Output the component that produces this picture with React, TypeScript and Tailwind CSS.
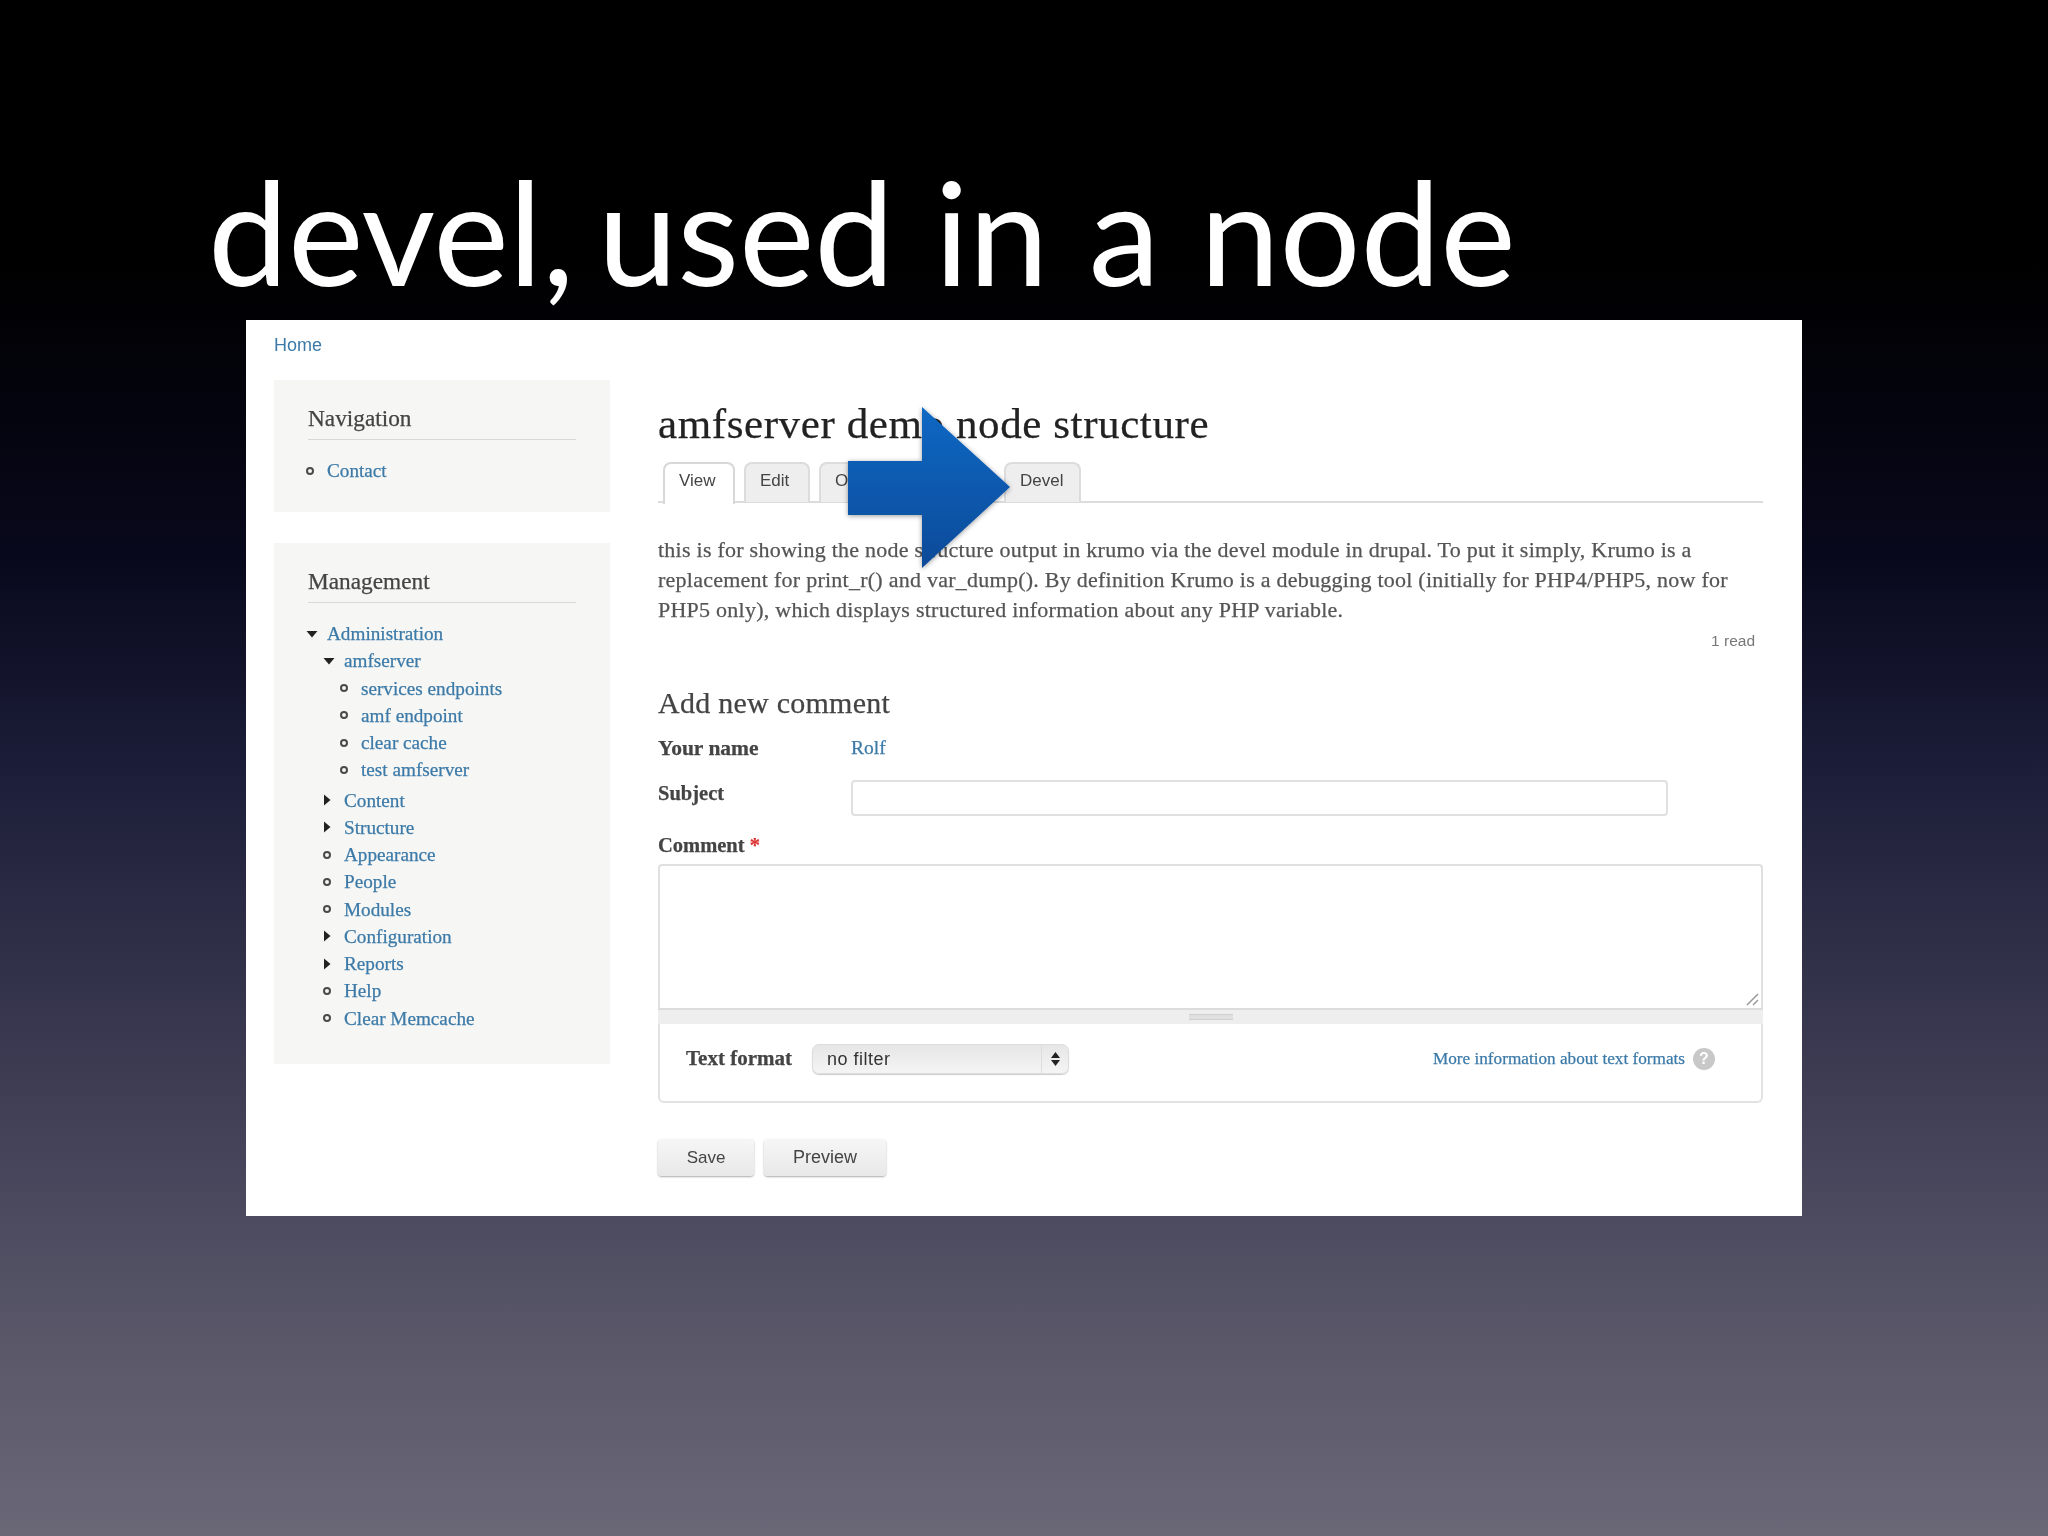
const serif = "font-['Liberation_Serif',serif] [-webkit-text-stroke:0.25px]";
const sans = "font-['Liberation_Sans',Arial,sans-serif]";

function Bullet() {
  return <span className="block h-[8px] w-[8px] rounded-full border-2 border-[#4a4a4a]" />;
}

function TriRight() {
  return (
    <svg width="8" height="12" viewBox="0 0 8 12">
      <path d="M1 0.5 L7.5 6 L1 11.5 Z" fill="#222" />
    </svg>
  );
}

function TriDown() {
  return (
    <svg width="12" height="8" viewBox="0 0 12 8">
      <path d="M0.5 1 L11.5 1 L6 7.5 Z" fill="#222" />
    </svg>
  );
}

function TreeRow({ label, depth, kind }: { label: string; depth: number; kind: 'leaf' | 'open' | 'closed' }) {
  const indent = depth === 0 ? 'pl-0' : depth === 1 ? 'pl-[17px]' : 'pl-[34px]';
  return (
    <div className={`flex h-[27.25px] items-center ${indent}`}>
      <span className="-ml-[2px] flex w-[21px] shrink-0 items-center justify-start">
        {kind === 'leaf' && <Bullet />}
        {kind === 'open' && <TriDown />}
        {kind === 'closed' && <TriRight />}
      </span>
      <a className={`${serif} text-[19.2px] leading-none text-[#3c7aa8] whitespace-nowrap`}>{label}</a>
    </div>
  );
}

function Block({ title, children, height }: { title: string; children: React.ReactNode; height: string }) {
  return (
    <div className={`bg-[#f6f6f4] px-[34px] pt-[24px] ${height}`}>
      <h2 className={`${serif} border-b border-[#d8d8d6] pb-[7px] text-[23.3px] leading-[28px] text-[#444]`}>{title}</h2>
      {children}
    </div>
  );
}

function Tab({ label, width, active }: { label: string; width: string; active?: boolean }) {
  return (
    <div
      className={`${sans} ${width} ${
        active ? 'bg-white -mb-[2px] h-[42px] border-[#d8d8d8]' : 'bg-[#eeeeee] h-[40px] border-[#dcdcdc]'
      } rounded-t-[8px] border-x-2 border-t-2 pl-[14px] pt-[6px] text-[17px] leading-[22px] text-[#444]`}
    >
      {label}
    </div>
  );
}

export default function App() {
  return (
    <div className="relative h-[1536px] w-[2048px] overflow-hidden bg-[linear-gradient(180deg,#000000_0%,#000000_17%,#08081c_36%,#1c1d38_50%,#403f56_72%,#5a5869_88%,#6a6877_100%)]">
      <div className="h-[320px] pl-[208px] pt-[141px]">
        <h1 className="font-['Lato',sans-serif] text-[143px] font-normal leading-[180px] tracking-[-0.2px] [word-spacing:4px] text-white whitespace-nowrap">
          <span className="-mr-[17px]">devel,</span> used in a node
        </h1>
      </div>

      <div className="ml-[246px] flex h-[896px] w-[1556px] bg-white">
        <aside className="ml-[28px] w-[336px] shrink-0 blur-[0.4px]">
          <div className={`${sans} h-[60px] pt-[15px] text-[18px] leading-[20px] text-[#3c7aa8]`}>Home</div>
          <Block title="Navigation" height="h-[132px]">
            <div className="mt-[17px]">
              <TreeRow label="Contact" depth={0} kind="leaf" />
            </div>
          </Block>
          <div className="mt-[31px]">
            <Block title="Management" height="h-[521px]">
              <div className="mt-[17px]">
                <TreeRow label="Administration" depth={0} kind="open" />
                <TreeRow label="amfserver" depth={1} kind="open" />
                <TreeRow label="services endpoints" depth={2} kind="leaf" />
                <TreeRow label="amf endpoint" depth={2} kind="leaf" />
                <TreeRow label="clear cache" depth={2} kind="leaf" />
                <TreeRow label="test amfserver" depth={2} kind="leaf" />
                <div className="mt-[3px]">
                  <TreeRow label="Content" depth={1} kind="closed" />
                  <TreeRow label="Structure" depth={1} kind="closed" />
                  <TreeRow label="Appearance" depth={1} kind="leaf" />
                  <TreeRow label="People" depth={1} kind="leaf" />
                  <TreeRow label="Modules" depth={1} kind="leaf" />
                  <TreeRow label="Configuration" depth={1} kind="closed" />
                  <TreeRow label="Reports" depth={1} kind="closed" />
                  <TreeRow label="Help" depth={1} kind="leaf" />
                  <TreeRow label="Clear Memcache" depth={1} kind="leaf" />
                </div>
              </div>
            </Block>
          </div>
        </aside>

        <main className="ml-[48px] w-[1105px] shrink-0 pt-[80px] blur-[0.4px]">
          <h1 className={`${serif} text-[43px] leading-[48px] tracking-[0.6px] text-[#222] whitespace-nowrap`}>amfserver demo node structure</h1>

          <div className="mt-[14px] flex h-[41px] gap-[9px] border-b-2 border-[#dcdcdc] pl-[5px]">
            <Tab label="View" width="w-[72px]" active />
            <Tab label="Edit" width="w-[66px]" />
            <Tab label="Outline" width="w-[110px]" />
            <div className="w-[57px]" />
            <Tab label="Devel" width="w-[77px]" />
          </div>

          <p className={`${serif} mt-[32px] text-[22px] leading-[30px] tracking-[0.25px] text-[#555] whitespace-nowrap`}>
            this is for showing the node structure output in krumo via the devel module in drupal. To put it simply, Krumo is a
            <br />
            replacement for print_r() and var_dump(). By definition Krumo is a debugging tool (initially for PHP4/PHP5, now for
            <br />
            PHP5 only), which displays structured information about any PHP variable.
          </p>
          <div className={`${sans} mt-[8px] pr-[8px] text-right text-[15.5px] leading-[16px] text-[#777]`}>1 read</div>

          <h2 className={`${serif} mt-[36px] text-[30px] leading-[36px] tracking-[0.25px] text-[#444]`}>Add new comment</h2>

          <div className="mt-[15px] flex h-[24px] items-center">
            <span className={`${serif} w-[193px] text-[21.5px] font-bold text-[#444]`}>Your name</span>
            <a className={`${serif} text-[19.5px] text-[#3c7aa8]`}>Rolf</a>
          </div>

          <div className="mt-[20px] flex h-[36px] items-start">
            <span className={`${serif} w-[193px] text-[20.5px] font-bold leading-[26px] text-[#444]`}>Subject</span>
            <input className="h-[36px] w-[817px] rounded-[4px] border-2 border-[#e0e0e0] bg-white" readOnly />
          </div>

          <div className={`${serif} mt-[17px] text-[20.5px] font-bold leading-[24px] text-[#444]`}>
            Comment <span className="text-[#d33]">*</span>
          </div>

          <div className="relative mt-[7px] h-[144px] rounded-t-[4px] border-2 border-b-0 border-[#e0e0e0] bg-white">
            <svg className="absolute bottom-[2px] right-[2px]" width="14" height="14" viewBox="0 0 14 14">
              <path d="M2 13 L13 2 M8 13 L13 8" stroke="#999" strokeWidth="1.5" fill="none" />
            </svg>
          </div>
          <div className="flex h-[16px] items-center justify-center border-t-2 border-[#dcdcdc] bg-[#eeeeee]">
            <span className="block h-[6px] w-[44px] border-y border-[#cfcfcf] bg-[#e0e0e0]" />
          </div>
          <div className="flex h-[79px] items-center rounded-b-[6px] border-2 border-t-0 border-[#e2e2e2] pb-[7px] pl-[26px] pr-[46px]">
            <span className={`${serif} w-[126px] text-[21px] font-bold text-[#444]`}>Text format</span>
            <div className="flex h-[30px] w-[257px] items-center rounded-[7px] border border-[#dddddd] bg-[linear-gradient(180deg,#e6e6e6,#f4f4f4)] shadow-[0_1px_1px_#cccccc]">
              <span className={`${sans} flex-1 pl-[14px] text-[18px] tracking-[0.5px] text-[#333]`}>no filter</span>
              <span className="flex h-full w-[27px] flex-col items-center justify-center gap-[2px] border-l border-[#dddddd]">
                <svg width="9" height="6" viewBox="0 0 9 6"><path d="M4.5 0 L9 6 L0 6 Z" fill="#222" /></svg>
                <svg width="9" height="6" viewBox="0 0 9 6"><path d="M0 0 L9 0 L4.5 6 Z" fill="#222" /></svg>
              </span>
            </div>
            <a className={`${serif} ml-auto text-[17.2px] text-[#3c7aa8] whitespace-nowrap`}>More information about text formats</a>
            <span className={`${sans} ml-[8px] flex h-[22px] w-[22px] items-center justify-center rounded-full bg-[#c8c8c8] text-[16px] font-bold text-white`}>?</span>
          </div>

          <div className="mt-[36px] flex gap-[10px]">
            <button className={`${sans} h-[37px] w-[96px] rounded-[4px] bg-[linear-gradient(180deg,#f6f6f6,#e8e8e8)] text-[17px] text-[#444] shadow-[0_1px_2px_#aaaaaa]`}>Save</button>
            <button className={`${sans} h-[37px] w-[122px] rounded-[4px] bg-[linear-gradient(180deg,#f6f6f6,#e8e8e8)] text-[18px] text-[#444] shadow-[0_1px_2px_#aaaaaa]`}>Preview</button>
          </div>
        </main>
      </div>

      {/* big pointer laid over the tabs */}
      <svg className="absolute left-[840px] top-[400px]" width="180" height="176" viewBox="840 400 180 176">
        <defs>
          <linearGradient id="arrowFill" x1="0" y1="0" x2="0" y2="1">
            <stop offset="0" stopColor="#0868c4" />
            <stop offset="1" stopColor="#0c4a98" />
          </linearGradient>
          <filter id="arrowShadow" x="-10%" y="-10%" width="120%" height="120%">
            <feDropShadow dx="0" dy="1" stdDeviation="2.5" floodColor="#000" floodOpacity="0.4" />
          </filter>
        </defs>
        <path d="M848 461 L922 461 L922 407 L1010 487 L922 568 L922 515 L848 515 Z" fill="url(#arrowFill)" filter="url(#arrowShadow)" />
      </svg>
    </div>
  );
}
